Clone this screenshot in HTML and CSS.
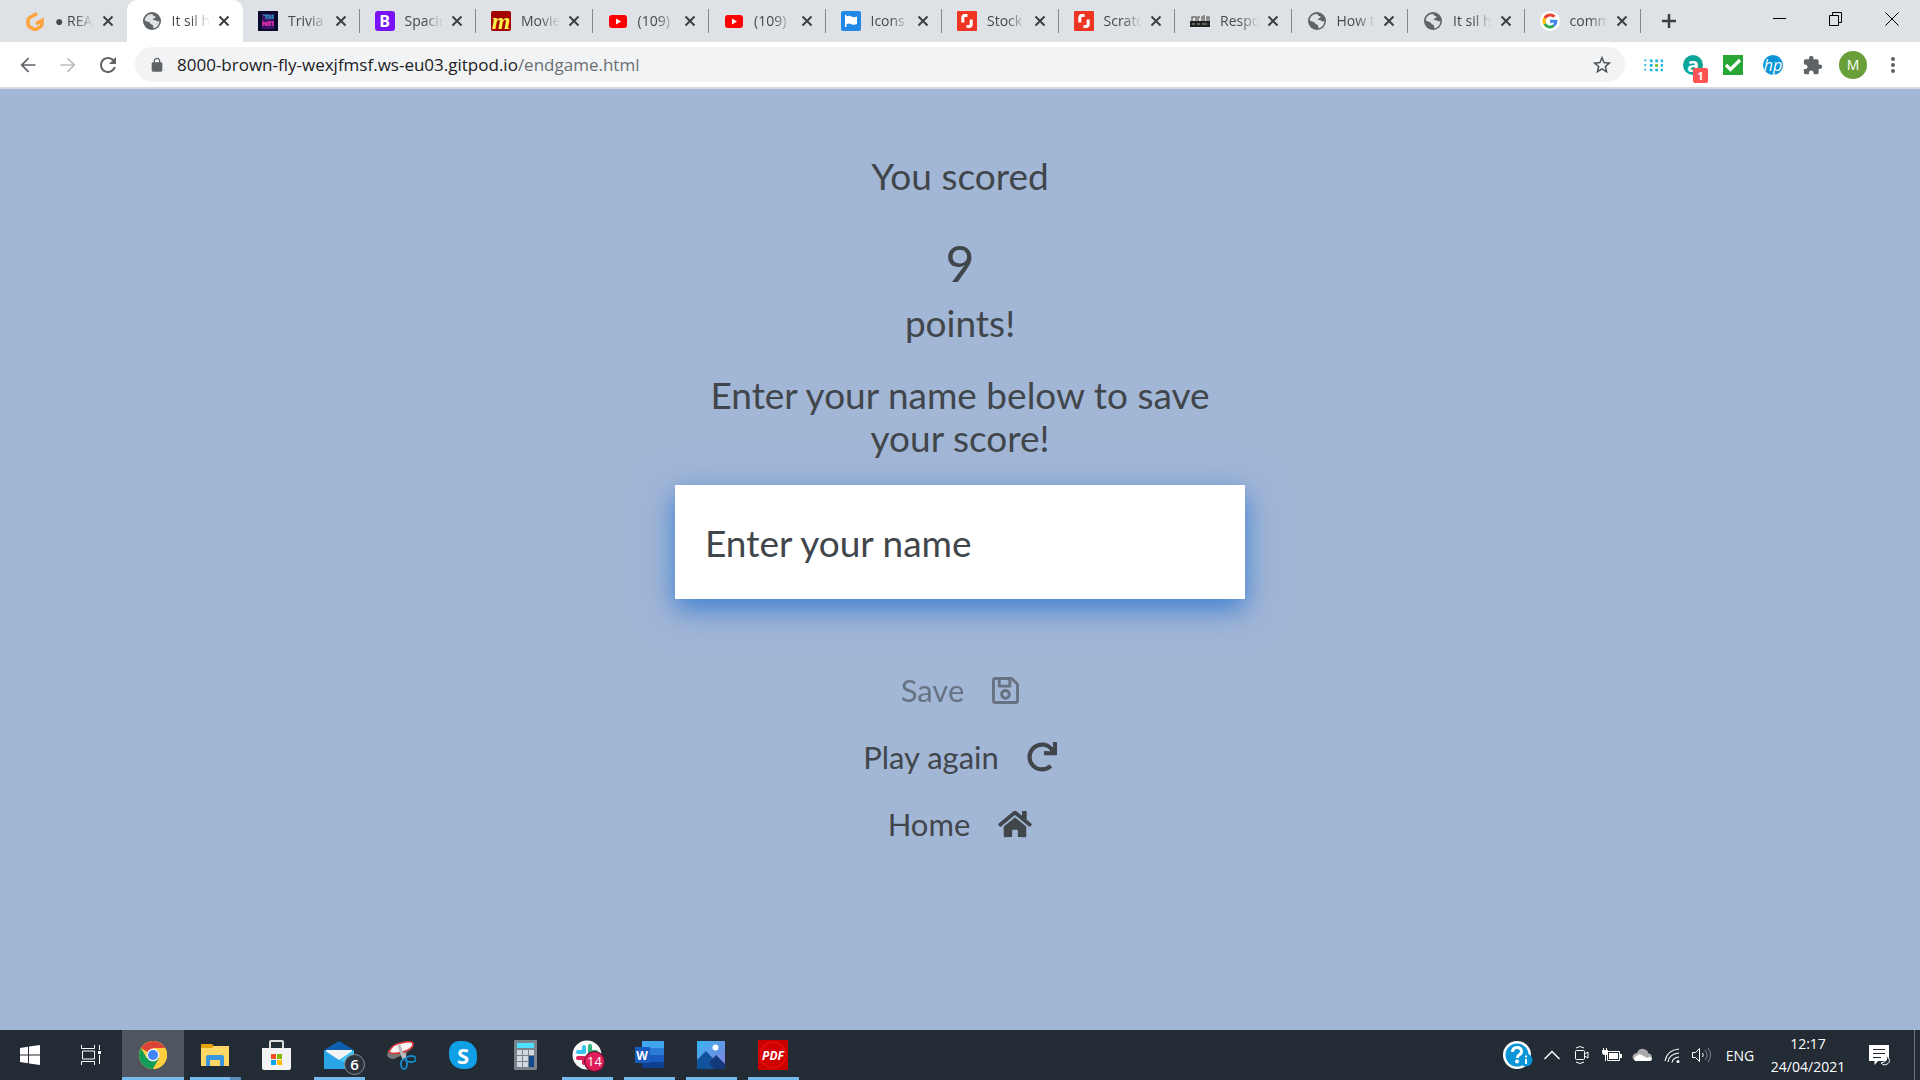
FILE: index.html
```html
<!DOCTYPE html>
<html lang="en">
<head>
<meta charset="utf-8">
<meta name="viewport" content="width=device-width, initial-scale=1">
<title>Endgame</title>
<link rel="stylesheet" href="styles.css">
</head>
<body>
<svg class="sprite" aria-hidden="true">
  <symbol id="close" viewBox="0 0 12 12"><path d="M1.500 1.500l9 9m0-9l-9 9" stroke="#3c4043" stroke-width="2" fill="none"/></symbol>
  <symbol id="globe" viewBox="0 0 20 20"><circle cx="10" cy="10" r="9" fill="#5f6368"/><path d="M9.500 3c2 .2 1 1.600 2.600 2 1.500 0 2 .8 1 1.800-1 .8-2 .4-2.200 1.800 0 1 2.600.2 3.600 1.200.8 1 2 .6 2.800 0 .2 4-2.400 7-5.800 7.400-.8-1 .4-2-1-3.200C9.400 13 8 12.600 7.600 11.400 6.400 10.400 4.600 10.600 2.800 9.400 3 6 5.600 3.200 9.500 3z" fill="#dee1e6"/></symbol>
  <symbol id="youtube" viewBox="0 0 20 20"><rect x="1" y="4" width="18" height="13" rx="3" fill="#f00"/><path d="M8 7.500v6l5-3z" fill="#fff"/></symbol>
  <symbol id="shutter" viewBox="0 0 20 20"><rect width="20" height="20" rx="1" fill="#ee3524"/><path d="M10.500 4.500H8Q5.800 4.500 5.800 6.700V11.500M9.500 15.500H12q2.200 0 2.200-2.200V8.500" stroke="#fff" stroke-width="3" fill="none"/></symbol>
</svg>

<header class="browser">
  <div class="tabstrip">
    <nav class="tabs" aria-label="Tabs">
      <div class="tab before-active"><svg class="favicon" viewBox="0 0 20 20"><path d="M12 2.500L5 6.500Q3 7.600 3 10v3q0 2 1.800 3l3.700 2q1.500.8 3 0l4-2.200q1.500-.9 1.500-2.700V9.500l-6 3.300" fill="none" stroke="#ffa33e" stroke-width="3.600"/></svg><span class="tab-title">● README</span><button class="close" aria-label="Close tab"><svg><use href="#close"/></svg></button></div>
      <div class="tab active"><svg class="favicon"><use href="#globe"/></svg><span class="tab-title">It sil he</span><button class="close" aria-label="Close tab"><svg><use href="#close"/></svg></button></div>
      <div class="tab"><svg class="favicon" viewBox="0 0 20 20"><rect width="20" height="20" fill="#0b0a2c"/><rect x="4" y="3" width="12" height="15" fill="#3a1466"/><path d="M5 4h3v4M9 8V4h2v4M12 4v4M14 8V4h1v4" stroke="#2aa3cc" stroke-width="1" fill="none"/><path d="M5 15v-4l2 2 1-2v4M10 15v-4h2v4M13 11h3m-1 0v4" stroke="#e02cae" stroke-width="1.500" fill="none"/></svg><span class="tab-title">Trivia</span><button class="close" aria-label="Close tab"><svg><use href="#close"/></svg></button></div>
      <div class="tab"><span class="favicon mark bootstrap">B</span><span class="tab-title">Spacing</span><button class="close" aria-label="Close tab"><svg><use href="#close"/></svg></button></div>
      <div class="tab"><span class="favicon mark movie">m</span><span class="tab-title">Movie</span><button class="close" aria-label="Close tab"><svg><use href="#close"/></svg></button></div>
      <div class="tab"><svg class="favicon"><use href="#youtube"/></svg><span class="tab-title">(109)</span><button class="close" aria-label="Close tab"><svg><use href="#close"/></svg></button></div>
      <div class="tab"><svg class="favicon"><use href="#youtube"/></svg><span class="tab-title">(109)</span><button class="close" aria-label="Close tab"><svg><use href="#close"/></svg></button></div>
      <div class="tab"><svg class="favicon" viewBox="0 0 20 20"><rect width="20" height="20" rx="2" fill="#228ae6"/><path d="M4 4q1.500-.6 1.500 1.200Q8 4.200 10.500 5.500T16 5.500V13q-3 1.500-5.500.2T5.500 13v3H4z" fill="#fff"/></svg><span class="tab-title">Icons</span><button class="close" aria-label="Close tab"><svg><use href="#close"/></svg></button></div>
      <div class="tab"><svg class="favicon"><use href="#shutter"/></svg><span class="tab-title">Stock</span><button class="close" aria-label="Close tab"><svg><use href="#close"/></svg></button></div>
      <div class="tab"><svg class="favicon"><use href="#shutter"/></svg><span class="tab-title">Scratch</span><button class="close" aria-label="Close tab"><svg><use href="#close"/></svg></button></div>
      <div class="tab"><svg class="favicon" viewBox="0 0 20 20"><rect y="10" width="20" height="6" fill="#222"/><path d="M2 10V6h4v4M8 10V6h2M12 10V6h2V4v6M17 10V6h2v4M2 13h3m2 0h3m2 0h5" stroke="#777" stroke-width="1.500" fill="none"/></svg><span class="tab-title">Respon</span><button class="close" aria-label="Close tab"><svg><use href="#close"/></svg></button></div>
      <div class="tab"><svg class="favicon"><use href="#globe"/></svg><span class="tab-title">How to</span><button class="close" aria-label="Close tab"><svg><use href="#close"/></svg></button></div>
      <div class="tab"><svg class="favicon"><use href="#globe"/></svg><span class="tab-title">It sil he</span><button class="close" aria-label="Close tab"><svg><use href="#close"/></svg></button></div>
      <div class="tab"><svg class="favicon" viewBox="0 0 20 20"><circle cx="10" cy="10" r="10" fill="#fff"/><g fill="none" stroke-width="3"><path d="M14.500 5.800A6 6 0 0 0 4.800 7.200" stroke="#ea4335"/><path d="M4.800 7.200a6 6 0 0 0 0 5.800" stroke="#fbbc05"/><path d="M4.800 13a6 6 0 0 0 9.200 1.500" stroke="#34a853"/><path d="M14 14.500a6 6 0 0 0 1.900-4.200H10" stroke="#4285f4"/></g></svg><span class="tab-title">comm</span><button class="close" aria-label="Close tab"><svg><use href="#close"/></svg></button></div>
    </nav>
    <div class="window-side">
      <button class="new-tab" aria-label="New tab"><svg width="16" height="16"><path d="M8 1v14M1 8h14" stroke="#3c4043" stroke-width="2.500"/></svg></button>
      <div class="window-controls">
        <button aria-label="Minimise"><svg width="14" height="14"><path d="M0 6.500h13" stroke="#000"/></svg></button>
        <button aria-label="Restore"><svg width="14" height="14" fill="none" stroke="#000"><path d="M.500 3.500h9v10h-9zM3.500 3.500v-3h9v10h-3"/></svg></button>
        <button aria-label="Close window"><svg width="14" height="14"><path d="M.500.500l13 13m0-13l-13 13" stroke="#000"/></svg></button>
      </div>
    </div>
  </div>
  <div class="toolbar">
    <button class="tool" aria-label="Back"><svg viewBox="0 0 24 24"><path d="M21 11H6.800l6.600-6.600L12 3l-9 9 9 9 1.400-1.400L6.800 13H21z" fill="#5f6368"/></svg></button>
    <button class="tool" aria-label="Forward"><svg viewBox="0 0 24 24"><path d="M3 11h14.200l-6.600-6.600L12 3l9 9-9 9-1.400-1.400 6.600-6.600H3z" fill="#bcbec1"/></svg></button>
    <button class="tool" aria-label="Reload"><svg viewBox="2 2 20 20"><path d="M17.650 6.350C16.200 4.900 14.210 4 12 4c-4.420 0-7.990 3.580-7.990 8s3.570 8 7.990 8c3.730 0 6.840-2.550 7.730-6h-2.080c-.82 2.330-3.040 4-5.650 4-3.310 0-6-2.690-6-6s2.690-6 6-6c1.660 0 3.140.69 4.220 1.780L13 11h7V4l-2.350 2.350z" fill="#5f6368"/></svg></button>
    <div class="address">
      <svg class="lock" viewBox="0 0 24 24"><path d="M18 8h-1V6c0-2.760-2.240-5-5-5S7 3.240 7 6v2H6c-1.100 0-2 .9-2 2v10c0 1.100.9 2 2 2h12c1.100 0 2-.9 2-2V10c0-1.100-.9-2-2-2zM9 6c0-1.660 1.340-3 3-3s3 1.340 3 3v2H9z" fill="#5f6368"/></svg>
      <span class="url">8000-brown-fly-wexjfmsf.ws-eu03.gitpod.io<span class="path">/endgame.html</span></span>
      <button class="star" aria-label="Bookmark"><svg viewBox="0 0 24 24"><path d="M22 9.240l-7.190-.62L12 2 9.190 8.630 2 9.240l5.460 4.730L5.820 21 12 17.270 18.180 21l-1.630-7.030L22 9.240zM12 15.400l-3.760 2.270 1-4.280-3.320-2.880 4.380-.38L12 6.100l1.710 4.040 4.380.38-3.320 2.880 1 4.280L12 15.400z" fill="#4a4d51"/></svg></button>
    </div>
    <div class="extensions">
      <button class="tool" aria-label="Dots extension"><svg viewBox="0 0 22 22"><g stroke="#1eb4e8" stroke-dasharray="3 2" fill="none"><path d="M9 5v14M15 5v14M21 5v14" stroke-width="3"/><path d="M2.500 5v14" stroke-width="2" stroke-dasharray="2 3"/></g><path d="M13.500 10h3v3h-3z" fill="#8cc21f"/></svg></button>
      <button class="tool" aria-label="Price extension"><span class="mark ext-a">a</span><span class="count">1</span></button>
      <button class="tool" aria-label="Check extension"><svg viewBox="0 0 20 20"><path d="M0 0h20v20H0z" fill="#28a736"/><path d="M3 10l4.500 4.500L17 5" stroke="#fff" stroke-width="3.200" fill="none"/></svg></button>
      <button class="tool" aria-label="HP extension"><span class="mark ext-hp">hp</span></button>
      <button class="tool" aria-label="Extensions"><svg viewBox="1 0 23 23"><path d="M20.500 11H19V7c0-1.100-.9-2-2-2h-4V3.500C13 2.120 11.880 1 10.500 1S8 2.120 8 3.500V5H4c-1.100 0-1.990.9-1.990 2v3.800H3.500c1.490 0 2.700 1.210 2.700 2.700s-1.210 2.700-2.700 2.700H2V20c0 1.100.9 2 2 2h3.800v-1.500c0-1.490 1.210-2.700 2.700-2.700 1.490 0 2.700 1.210 2.700 2.700V22H17c1.100 0 2-.9 2-2v-4h1.500c1.380 0 2.500-1.120 2.500-2.500S21.880 11 20.500 11z" fill="#5f6368"/></svg></button>
      <button class="tool" aria-label="Profile"><span class="avatar">M</span></button>
      <button class="tool" aria-label="Menu"><svg viewBox="0 0 20 20" fill="#5f6368"><circle cx="10" cy="4" r="2"/><circle cx="10" cy="10" r="2"/><circle cx="10" cy="16" r="2"/></svg></button>
    </div>
  </div>
</header>

<main class="endgame">
  <h2 class="line">You scored</h2>
  <h1 class="score">9</h1>
  <h2 class="line points">points!</h2>
  <form class="save-form">
    <label class="line prompt" for="username">Enter your name below to save your score!</label>
    <input class="name" id="username" type="text" placeholder="Enter your name">
    <div class="actions">
      <button class="action" type="submit" disabled>Save <svg width="27" height="31" viewBox="0 0 448 512"><path fill="currentColor" d="M433.941 129.941l-83.882-83.882A48 48 0 0 0 316.118 32H48C21.490 32 0 53.490 0 80v352c0 26.510 21.490 48 48 48h352c26.510 0 48-21.490 48-48V163.882a48 48 0 0 0-14.059-33.941zM272 80v80H144V80h128zm122 352H54a6 6 0 0 1-6-6V86a6 6 0 0 1 6-6h42v104c0 13.255 10.745 24 24 24h176c13.255 0 24-10.745 24-24V83.882l78.243 78.243a6 6 0 0 1 1.757 4.243V426a6 6 0 0 1-6 6zM224 232c-48.523 0-88 39.477-88 88s39.477 88 88 88 88-39.477 88-88-39.477-88-88-88zm0 128c-22.056 0-40-17.944-40-40s17.944-40 40-40 40 17.944 40 40-17.944 40-40 40z"/></svg></button>
      <a class="action" href="#play">Play again <svg width="30" height="30" viewBox="0 0 512 512"><path fill="currentColor" d="M500.330 0h-47.410a12 12 0 0 0-12 12.570l4 82.760A247.420 247.420 0 0 0 256 8C119.340 8 7.900 119.530 8 256.190 8.100 393.070 119.100 504 256 504a247.100 247.100 0 0 0 166.180-63.910 12 12 0 0 0 .48-17.430l-34-34a12 12 0 0 0-16.380-.55A176 176 0 1 1 402.100 157.800l-101.530-4.870a12 12 0 0 0-12.570 12v47.410a12 12 0 0 0 12 12h200.330a12 12 0 0 0 12-12V12a12 12 0 0 0-12-12z"/></svg></a>
      <a class="action" href="#home">Home <svg width="34" height="30" viewBox="0 0 576 512"><path fill="currentColor" d="M280.370 148.260L96 300.110V464a16 16 0 0 0 16 16l112.060-.29a16 16 0 0 0 15.920-16V368a16 16 0 0 1 16-16h64a16 16 0 0 1 16 16v95.640a16 16 0 0 0 16 16.050L464 480a16 16 0 0 0 16-16V300L295.670 148.260a12.190 12.190 0 0 0-15.300 0zM571.600 251.470L488 182.560V44.050a12 12 0 0 0-12-12h-56a12 12 0 0 0-12 12v72.610L318.470 43a48 48 0 0 0-61 0L4.340 251.470a12 12 0 0 0-1.600 16.900l25.500 31A12 12 0 0 0 45.150 301l235.220-193.740a12.190 12.190 0 0 1 15.300 0L530.900 301a12 12 0 0 0 16.900-1.600l25.500-31a12 12 0 0 0-1.700-16.930z"/></svg></a>
    </div>
  </form>
</main>

<footer class="taskbar">
  <div class="apps">
    <button class="app" aria-label="Start"><svg width="20" height="20" fill="#fff"><path d="M0 3l8-1.200V9.500H0zM9 1.600L20 0v9.500H9zM0 10.500h8v7.700L0 17zM9 10.500h11V20L9 18.400z"/></svg></button>
    <button class="app" aria-label="Task view"><svg width="21" height="20" fill="none" stroke="#fff"><path d="M.500 0v3.500h13V0M.500 20v-3.500h13V20M1.500 6h12v8h-12zM18.500 0v5M18.500 10v9"/><path d="M17 6h3v3h-3z" fill="#fff" stroke="none"/></svg></button>
    <button class="app running current" aria-label="Chrome"><svg width="28" height="28" viewBox="0 0 28 28"><circle cx="14" cy="14" r="14" fill="#ffcd40"/><path d="M14 14L1.900 7A14 14 0 0 1 26.100 7H14z" fill="#db4437"/><path d="M1.900 7A14 14 0 0 0 14 28l6.100-10.500L14 14 8 17.500z" fill="#0f9d58"/><path d="M14 7.500h12.400A14 14 0 0 1 14 28l6-10.500z" fill="#ffcd40"/><circle cx="14" cy="14" r="6.500" fill="#f1f1f1"/><circle cx="14" cy="14" r="5" fill="#4285f4"/></svg></button>
    <button class="app running grouped" aria-label="File Explorer"><svg width="28" height="24"><path d="M0 1h11l2 2h14v20H0z" fill="#e5a50a"/><path d="M0 5h11l2-2h15v20H0z" fill="#ffd866"/><path d="M5 23V14q0-2 2-2h14q2 0 2 2v9h-4v-6H9v6z" fill="#3a96dd"/></svg></button>
    <button class="app" aria-label="Store"><svg width="30" height="30"><path d="M8 9V2q0-1 1-1h11q1 0 1 1v7" fill="none" stroke="#ddd" stroke-width="2"/><path d="M0 8h29v20q0 2-2 2H2q-2 0-2-2z" fill="#f3f3f3"/><path d="M9 14h5v5H9z" fill="#f25022"/><path d="M15 14h5v5h-5z" fill="#7fba00"/><path d="M9 20h5v5H9z" fill="#00a4ef"/><path d="M15 20h5v5h-5z" fill="#ffb900"/></svg></button>
    <button class="app running" aria-label="Mail"><svg width="30" height="28"><path d="M0 9L15 0l15 9v18H0z" fill="#0f5fb0"/><path d="M2 9h26v12H2z" fill="#f4f4f4"/><path d="M0 9l15 10L30 9v19H0z" fill="#2aa6e8"/><path d="M30 9L16 19l14 7z" fill="#41c8f5"/></svg><span class="badge mail-badge">6</span></button>
    <button class="app" aria-label="Snipping Tool"><svg width="30" height="30" fill="none"><path d="M1 15q0-6 8-9l17-4q3 1 1 5-4 5-11 8l-8 4q-6 0-7-4z" fill="#777"/><path d="M3 12Q6 4 15 3q12-3 12 1 0 5-10 8T3 12z" fill="#f4f4f4" stroke="#d33" stroke-width="1.500"/><path d="M13 5l5 15M18 20l1-7" stroke="#bbb" stroke-width="3"/><ellipse cx="18" cy="24" rx="3" ry="5" stroke="#1688c4" stroke-width="2"/><ellipse cx="25" cy="19" rx="5" ry="3" stroke="#1688c4" stroke-width="2"/></svg></button>
    <button class="app" aria-label="Skype"><span class="mark skype">S</span></button>
    <button class="app" aria-label="Calculator"><svg width="23" height="30"><rect width="23" height="30" rx="1" fill="#7b848d"/><path d="M3 3h17v5H3z" fill="#50e0ff"/><path d="M3 10h5v5H3zM9 10h5v5H9zM15 10h5v5h-5zM3 16h5v5H3zM9 16h5v5H9zM3 22h5v5H3zM9 22h5v5H9z" fill="#d5dae0"/><path d="M15 16h5v11h-5z" fill="#124a8c"/></svg></button>
    <button class="app running" aria-label="Slack"><svg width="30" height="30"><circle cx="15" cy="15" r="14.500" fill="#f8f8f8"/><g stroke-width="4" stroke-linecap="round"><path d="M12 7v5M6 12h6" stroke="#36c5f0"/><path d="M18 6v7M20 12h4" stroke="#2eb67d"/><path d="M6 18h6M12 19v4" stroke="#e01e5a"/><path d="M18 18h6" stroke="#ecb22e"/></g></svg><span class="badge slack-badge">14</span></button>
    <button class="app running" aria-label="Word"><span class="word"><svg width="29" height="28"><path d="M7 0h22v7H7z" fill="#41a5ee"/><path d="M7 7h22v7H7z" fill="#2b7cd3"/><path d="M7 14h22v7H7z" fill="#185abd"/><path d="M7 21h22v6H7z" fill="#103f91"/></svg><span class="mark word-mark">W</span></span></button>
    <button class="app running" aria-label="Photos"><svg width="28" height="28"><defs><linearGradient id="sky" x2="1" y2="1"><stop stop-color="#35b5ee"/><stop offset="1" stop-color="#8b7de0"/></linearGradient></defs><path d="M0 0h28v28H0z" fill="url(#sky)"/><path d="M0 19l9-9 17 18H0z" fill="#11529c"/><path d="M12 22l7-8 9 9v5H17z" fill="#15397b"/><circle cx="18.500" cy="6.500" r="3" fill="#fff"/></svg></button>
    <button class="app running" aria-label="PDF"><span class="mark pdf">PDF</span></button>
  </div>
  <div class="tray">
    <button class="tray-item help" aria-label="Help"><svg width="30" height="28"><circle cx="14" cy="14" r="14" fill="#fff"/><circle cx="14" cy="14" r="11.500" fill="#0a96d6"/><path d="M9.500 11q0-4.500 4.500-4.500t4.500 4q0 2.500-2.500 3.500-1.500.8-1.500 3" fill="none" stroke="#fff" stroke-width="3"/><circle cx="14" cy="20.500" r="2" fill="#fff"/><circle cx="23" cy="19" r="6.500" fill="#0a96d6"/><path d="M23 18v5M23 14.500v2" stroke="#fff" stroke-width="2"/></svg></button>
    <button class="tray-item" aria-label="Show hidden icons"><svg width="16" height="10"><path d="M.500 9L8 1.500 15.500 9" fill="none" stroke="#fff" stroke-width="1.500"/></svg></button>
    <button class="tray-item" aria-label="Meet now"><svg width="16" height="18" fill="none" stroke="#fff"><path d="M2.500 4.500h7q1 0 1 1v7q0 1-1 1h-7q-1 0-1-1v-7q0-1 1-1zM10.500 8l3.500-2v6l-3.500-2M2 2q4-3 8 0M2 16q4 3 8 0"/></svg></button>
    <button class="tray-item" aria-label="Battery"><svg width="20" height="14"><path d="M5.500 3.500h12v9h-12z" fill="none" stroke="#fff"/><path d="M7 5h9v6H7zM18 6h2v4h-2zM0 2h6v3q0 2-2 2v6H3V7Q0 7 0 4zM1 0h1v2H1zM4 0h1v2H4z" fill="#fff"/></svg></button>
    <button class="tray-item" aria-label="OneDrive"><svg width="20" height="14"><path d="M2 12Q-1 9 2 6q2-1 3-1 2-5 7-4 4 1 4 4 4 1 4 4l-8 4z" fill="#aaa"/><path d="M3 13q-2-3 1-5l4-2 7 4q3-2 5 0 0 3-2 3z" fill="#fff"/></svg></button>
    <button class="tray-item" aria-label="Wi-Fi"><svg width="17" height="17" fill="none" stroke="#fff"><path d="M1 14Q3 3 15 2M4 15q1-8 11-9M8 15.500q1-5 7-5.500" stroke-width="1.200"/><circle cx="14" cy="14.500" r="1.500" fill="#fff" stroke="none"/></svg></button>
    <button class="tray-item" aria-label="Volume"><svg width="20" height="18" fill="none" stroke="#fff"><path d="M.500 6.500h3l4-4v13l-4-4h-3zM10.500 7q1.500 2 0 4"/><path d="M13 4q4 5 0 10M16 2q5 7 0 14" stroke="#808791"/></svg></button>
    <button class="tray-item language">ENG</button>
    <button class="tray-item clock"><span>12:17</span><span>24/04/2021</span></button>
    <button class="tray-item notify" aria-label="Notifications"><svg width="21" height="21"><path d="M0 0h20v16H9l-3.500 4v-4H0z" fill="#fff"/><path d="M4 4.500h12M4 8.500h12M4 12.500h8" stroke="#232b35"/><path d="M16.500 9.500q4 7-4.500 8.500 3 3.500 7 .5t-2.500-9z" fill="#232b35" stroke="#fff"/></svg></button>
    <button class="show-desktop" aria-label="Show desktop"></button>
  </div>
</footer>
</body>
</html>
```
FILE: styles.css
```css
* {
  box-sizing: border-box;
}

body {
  margin: 0;
  min-height: 100vh;
  display: flex;
  flex-direction: column;
  background: #a2b6d6;
  color: #41464b;
  font-family: "Open Sans", "Noto Sans", sans-serif;
}

button {
  padding: 0;
  border: 0;
  background: none;
  color: inherit;
  font: inherit;
}

svg {
  display: block;
  flex: none;
}

.sprite {
  position: absolute;
  width: 0;
  height: 0;
}

.mark {
  display: flex;
  align-items: center;
  justify-content: center;
  color: #fff;
  font-weight: 700;
}

/* Tab strip */
.tabstrip {
  display: flex;
  height: 42px;
  background: #dee1e6;
}

.tabs {
  flex: 1;
  min-width: 0;
  display: flex;
  padding-left: 12px;
}

.tab {
  flex: 1 1 0;
  min-width: 0;
  display: flex;
  align-items: center;
  padding: 0 13px 0 15px;
  background: linear-gradient(#84878b, #84878b) right center / 1px 24px no-repeat;
}

.tab.before-active {
  padding-left: 13px;
  background: none;
}

.tab.active {
  background: #fff;
  border-radius: 10px 10px 0 0;
}

.favicon {
  flex: none;
  width: 20px;
  height: 20px;
}

.bootstrap {
  border-radius: 3px;
  background: #7a12f7;
  font-size: 16px;
}

.movie {
  border-radius: 2px;
  background: #a40000;
  color: #fff04a;
  font: italic 700 24px/16px "Liberation Serif", serif;
}

.tab-title {
  flex: 1;
  min-width: 0;
  margin: 0 8px 0 10px;
  overflow: hidden;
  white-space: nowrap;
  font-size: 14px;
  line-height: 20px;
  color: #45484c;
  -webkit-mask-image: linear-gradient(90deg, #000 50%, transparent);
  mask-image: linear-gradient(90deg, #000 50%, transparent);
}

.close svg {
  width: 12px;
  height: 12px;
}

.window-side {
  flex: none;
  width: 279px;
  display: flex;
  justify-content: space-between;
  padding-left: 20px;
}

.window-controls {
  display: flex;
  align-items: flex-start;
}

.window-controls button {
  width: 56px;
  height: 37px;
  display: grid;
  place-items: center;
}

/* Toolbar */
.toolbar {
  display: flex;
  align-items: center;
  height: 47px;
  padding: 0 7px 0 8px;
  border-bottom: 2px solid #d8dadd;
  background: #fff;
}

.tool {
  position: relative;
  flex: none;
  width: 40px;
  height: 36px;
  display: grid;
  place-items: center;
}

.tool svg {
  width: 20px;
  height: 20px;
}

.address {
  flex: 1;
  min-width: 0;
  display: flex;
  align-items: center;
  height: 35px;
  margin: 0 8px 0 7px;
  padding: 0 12px 0 14px;
  border-radius: 18px;
  background: #f1f3f4;
}

.lock {
  width: 16px;
  height: 16px;
}

.url {
  flex: 1;
  min-width: 0;
  margin-left: 12px;
  overflow: hidden;
  white-space: nowrap;
  font-size: 17px;
  line-height: 24px;
  color: #202124;
}

.path {
  color: #6b6f74;
}

.star svg {
  width: 22px;
  height: 22px;
}

.extensions {
  display: flex;
}

.ext-a,
.ext-hp {
  width: 20px;
  height: 20px;
  border-radius: 50%;
}

.ext-a {
  background: #0aa597;
  font-size: 20px;
  line-height: 12px;
}

.ext-hp {
  background: #0a96d6;
  font-size: 16px;
  font-style: italic;
  font-weight: 400;
  line-height: 16px;
}

.count {
  position: absolute;
  right: 5px;
  bottom: 0;
  width: 15px;
  height: 15px;
  border-radius: 2px;
  background: #ff5252;
  color: #fff;
  font-size: 11px;
  font-weight: 700;
  line-height: 15px;
}

.avatar {
  width: 28px;
  height: 28px;
  border-radius: 50%;
  background: #689f38;
  color: #fff;
  font-size: 14px;
  line-height: 28px;
}

/* Page */
.endgame {
  flex: 1;
  width: 100%;
  max-width: 570px;
  margin: 0 auto;
  padding: 65px 0;
  font-family: Lato, "Open Sans", sans-serif;
  font-weight: 400;
  text-align: center;
}

.line,
.score {
  display: block;
  margin: 0;
  font-size: 37px;
  font-weight: 400;
  line-height: 43px;
}

.score {
  margin-top: 36px;
  font-size: 50px;
  line-height: 60px;
}

.points {
  margin: 8px 0 29px;
}

.prompt {
  padding: 0 20px;
}

.name {
  display: block;
  width: 100%;
  height: 114px;
  margin-top: 26px;
  padding: 0 30px;
  border: 0;
  background: #fff;
  box-shadow: 0 10px 25px rgba(56, 123, 212, 0.9), 0 8px 36px 4px #98b2d3;
  color: #41464b;
  font: inherit;
  font-size: 37px;
}

.name::placeholder {
  color: #41464b;
  opacity: 1;
}

.actions {
  display: flex;
  flex-direction: column;
  align-items: center;
  gap: 31px;
  margin-top: 73px;
}

.action {
  display: flex;
  align-items: center;
  gap: 28px;
  color: #41464b;
  font-size: 31px;
  line-height: 36px;
  text-decoration: none;
}

.action:disabled {
  opacity: 0.6;
}

/* Taskbar */
.taskbar {
  display: flex;
  justify-content: space-between;
  height: 50px;
  background: #232b35;
  color: #fff;
}

.apps,
.tray {
  display: flex;
}

.app {
  position: relative;
  width: 62px;
  height: 50px;
  display: grid;
  place-items: center;
}

.app:first-child {
  width: 60px;
}

.running {
  background: linear-gradient(#76b9ed, #76b9ed) center bottom / 51px 3px no-repeat;
}

.grouped {
  background-image: linear-gradient(90deg, #76b9ed 40px, #5a8dba 40px);
}

.current {
  background-color: #50565f;
  background-size: 100% 3px;
}

.badge {
  position: absolute;
  border-radius: 50%;
  text-align: center;
}

.mail-badge {
  right: 5px;
  bottom: 5px;
  width: 21px;
  height: 21px;
  border: 1px solid #8d9299;
  background: #2b333d;
  font-size: 15px;
  font-weight: 600;
  line-height: 19px;
}

.slack-badge {
  right: 14px;
  bottom: 9px;
  width: 19px;
  height: 19px;
  background: #e01e5a;
  box-shadow: 0 0 0 1px #5c1230;
  font-size: 13px;
  line-height: 18px;
}

.skype {
  width: 28px;
  height: 28px;
  border-radius: 10px 14px;
  background: #0f9fe6;
  font-size: 22px;
  line-height: 28px;
}

.word {
  position: relative;
}

.word-mark {
  position: absolute;
  left: 0;
  top: 6px;
  width: 15px;
  height: 16px;
  background: #185abd;
  font-size: 12px;
}

.pdf {
  width: 30px;
  height: 30px;
  background: radial-gradient(circle, #d00000 55%, #f01010 60%, #c80000 66%);
  font-size: 12px;
  font-style: italic;
}

.tray-item {
  width: 30px;
  display: grid;
  place-items: center;
  font-size: 14px;
}

.help {
  width: 38px;
}

.language {
  width: 46px;
}

.clock {
  width: 90px;
  align-content: center;
  line-height: 23px;
}

.notify {
  width: 52px;
}

.show-desktop {
  width: 6px;
  margin-left: 9px;
  border-left: 1px solid #6f757d;
}
```
